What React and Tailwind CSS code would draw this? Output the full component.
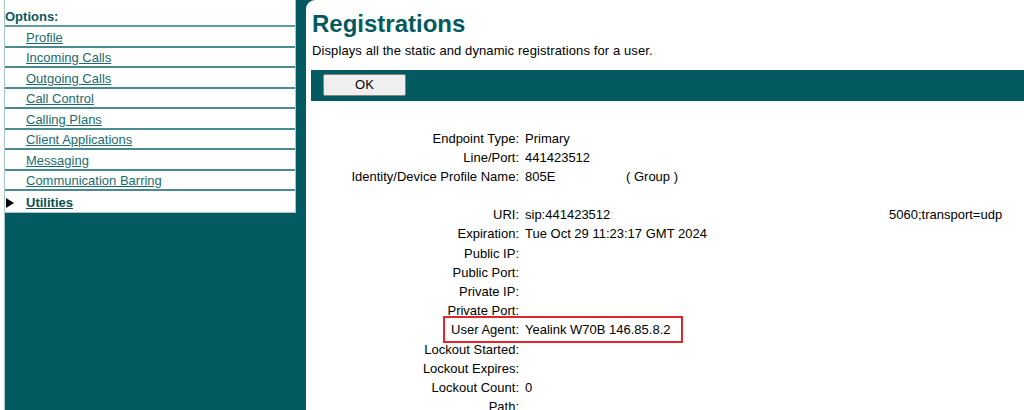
import React from "react";

const TEAL = "bg-[#035a60]";

const links = [
  "Profile",
  "Incoming Calls",
  "Outgoing Calls",
  "Call Control",
  "Calling Plans",
  "Client Applications",
  "Messaging",
  "Communication Barring",
];

const rows = [
  ["Endpoint Type:", "Primary"],
  ["Line/Port:", "441423512"],
  ["Identity/Device Profile Name:", "group"],
  ["", ""],
  ["URI:", "uri"],
  ["Expiration:", "Tue Oct 29 11:23:17 GMT 2024"],
  ["Public IP:", ""],
  ["Public Port:", ""],
  ["Private IP:", ""],
  ["Private Port:", ""],
  ["User Agent:", "Yealink W70B 146.85.8.2"],
  ["Lockout Started:", ""],
  ["Lockout Expires:", ""],
  ["Lockout Count:", "0"],
  ["Path:", ""],
];

function Value({ v }) {
  if (v === "group")
    return (
      <span>
        <span className="inline-block w-[101px]">805E</span>( Group )
      </span>
    );
  if (v === "uri")
    return (
      <span>
        <span className="inline-block w-[364px]">
          sip:441423512<span className="text-[#c8c8c8]">:</span>
        </span>
        5060;transport=udp
      </span>
    );
  return <span>{v}</span>;
}

export default function App() {
  return (
    <div className="flex h-[410px] w-[1024px] overflow-hidden bg-white font-['Liberation_Sans',Arial,sans-serif] text-[13px] text-black">
      {/* Sidebar */}
      <div className={`ml-[4px] w-[302px] shrink-0 ${TEAL} border-l border-[#a9c6c8]`}>
        <div className="w-[291px] h-[213px] bg-white border-r border-b border-[#a9c6c8]">
          <div className="flex h-[27px] items-end pb-[1px] border-b-2 border-[#5f9a9e] leading-[15px] font-bold text-[#0b585e]">
            Options:
          </div>
          {links.map((l) => (
            <div
              key={l}
              className="flex h-[20.5px] items-center border-b-2 border-[#4b8a8f] pl-[21px] pt-[2px] leading-[15px]"
            >
              <a className="text-[#1c6b70] underline underline-offset-[1px] cursor-pointer">{l}</a>
            </div>
          ))}
          <div className="relative flex h-[21px] items-center pl-[21px] pt-[2px] leading-[15px]">
            <svg
              className="absolute left-[1px] top-[7px]"
              width="8"
              height="10"
              viewBox="0 0 8 10"
            >
              <polygon points="0,0 8,5 0,10" fill="#000" />
            </svg>
            <a className="font-bold text-[#0b4f55] underline underline-offset-[1px] cursor-pointer">
              Utilities
            </a>
          </div>
        </div>
      </div>

      {/* Main */}
      <div className={`flex-1 ${TEAL}`}>
        <div className="h-full bg-white rounded-tl-[9px] pl-[5px]">
          <h1 className="ml-[1px] pt-[10px] text-[24px] leading-[28px] font-bold text-[#035a60]">
            Registrations
          </h1>
          <p className="ml-[1px] mt-[5px] leading-[15px] tracking-[0.1px]">
            Displays all the static and dynamic registrations for a user.
          </p>
          <div className={`mt-[12px] h-[31px] ${TEAL} pt-[4px] pl-[12px]`}>
            <button className="h-[22px] w-[83px] rounded-[2px] border border-[#858585] bg-[#efefef] text-[13px] leading-[20px] text-black">
              OK
            </button>
          </div>

          <div className="mt-[27.5px] ml-[1px]">
            {rows.map(([label, v], i) => (
              <div key={i} className="relative flex h-[19.2px] leading-[19.2px] whitespace-nowrap">
                <div className="w-[207px] text-right">{label}</div>
                <div className="pl-[6px]">
                  <Value v={v} />
                </div>
                {label === "User Agent:" && (
                  <div className="absolute left-[131px] top-[-4px] h-[27px] w-[240px] border-2 border-[#e0262b]" />
                )}
              </div>
            ))}
          </div>
        </div>
      </div>
    </div>
  );
}
